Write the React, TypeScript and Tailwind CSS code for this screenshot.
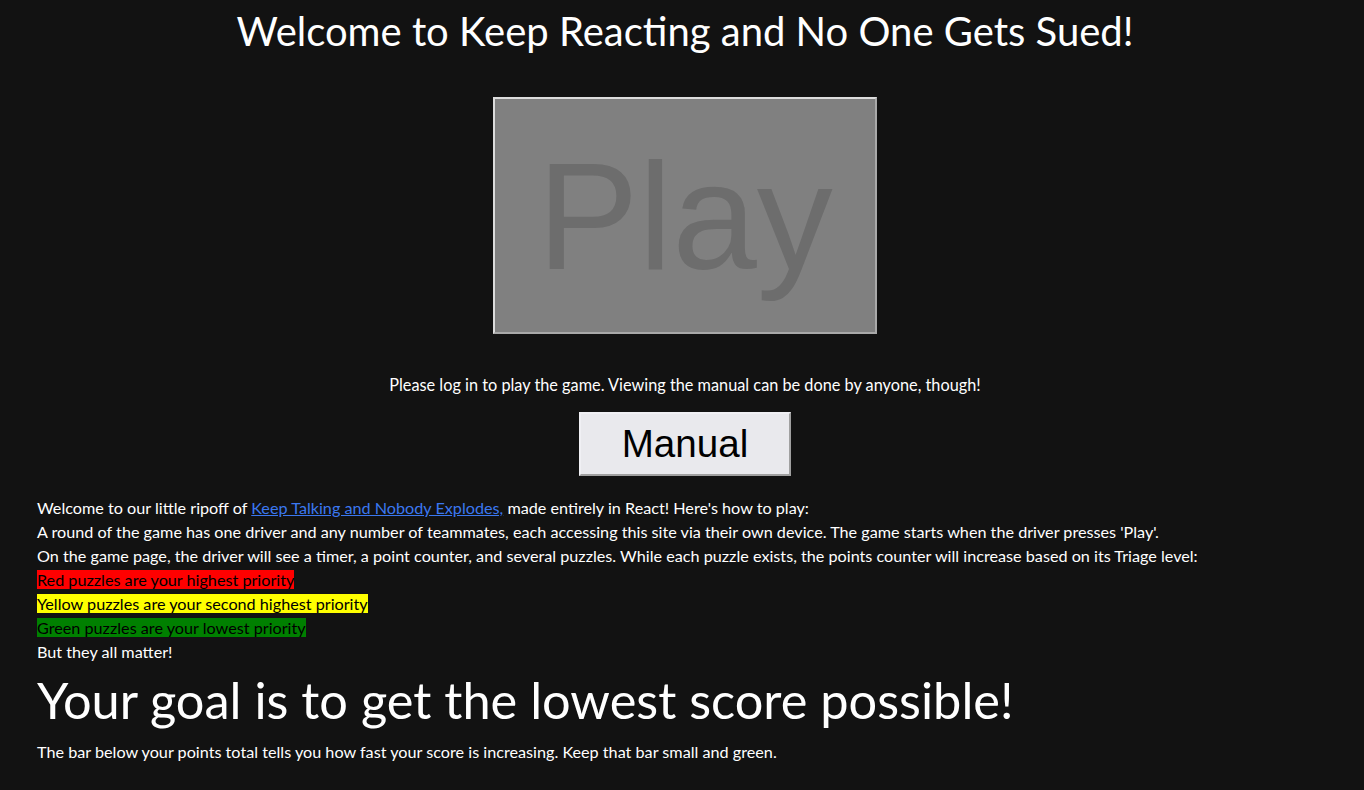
export default function App() {
  return (
    <main className="min-h-screen bg-[#121212] text-white font-['Lato','Noto_Sans',sans-serif]">
      <h1 className="pl-[6px] pt-[6px] text-center text-[40px] leading-[50px]">
        Welcome to Keep Reacting and No One Gets Sued!
      </h1>

      <div className="mt-[41px] flex justify-center pl-[6px]">
        <button className="flex h-[237px] w-[384px] items-center justify-center border-2 border-t-[#dcdcdc] border-l-[#dcdcdc] border-r-[#a9a9a9] border-b-[#a9a9a9] bg-[#808080] font-['Liberation_Sans',Arial,sans-serif] text-[152px] text-[#6d6d6d] cursor-not-allowed">
          Play
        </button>
      </div>

      <p className="mt-[39px] pl-[6px] text-center text-[16.3px] leading-[24px]">
        Please log in to play the game. Viewing the manual can be done by anyone, though!
      </p>

      <div className="mt-[15px] flex justify-center pl-[6px]">
        <button className="flex h-[64px] w-[212px] items-center justify-center border-2 border-t-[#f0f0f4] border-l-[#f0f0f4] border-r-[#a0a0a0] border-b-[#a0a0a0] bg-[#e9e9ed] font-['Liberation_Sans',Arial,sans-serif] text-[38.6px] text-black">
          Manual
        </button>
      </div>

      <section className="mt-[20px] px-[37px] text-[16.2px] leading-[24px]">
        <p>
          Welcome to our little ripoff of{' '}
          <a href="#" className="text-[#3b78f0] underline">
            Keep Talking and Nobody Explodes,
          </a>{' '}
          made entirely in React! Here's how to play:
        </p>
        <p>
          A round of the game has one driver and any number of teammates, each accessing this site via their own device. The game starts when the driver presses 'Play'.
        </p>
        <p>
          On the game page, the driver will see a timer, a point counter, and several puzzles. While each puzzle exists, the points counter will increase based on its Triage level:
        </p>
        <p><span className="bg-[#ff0000] text-black">Red puzzles are your highest priority</span></p>
        <p><span className="bg-[#ffff00] text-black">Yellow puzzles are your second highest priority</span></p>
        <p><span className="bg-[#008000] text-black">Green puzzles are your lowest priority</span></p>
        <p>But they all matter!</p>
        <h2 className="mt-[6px] text-[50.5px] leading-[60px]">Your goal is to get the lowest score possible!</h2>
        <p className="mt-[10px]">
          The bar below your points total tells you how fast your score is increasing. Keep that bar small and green.
        </p>
      </section>
    </main>
  )
}
